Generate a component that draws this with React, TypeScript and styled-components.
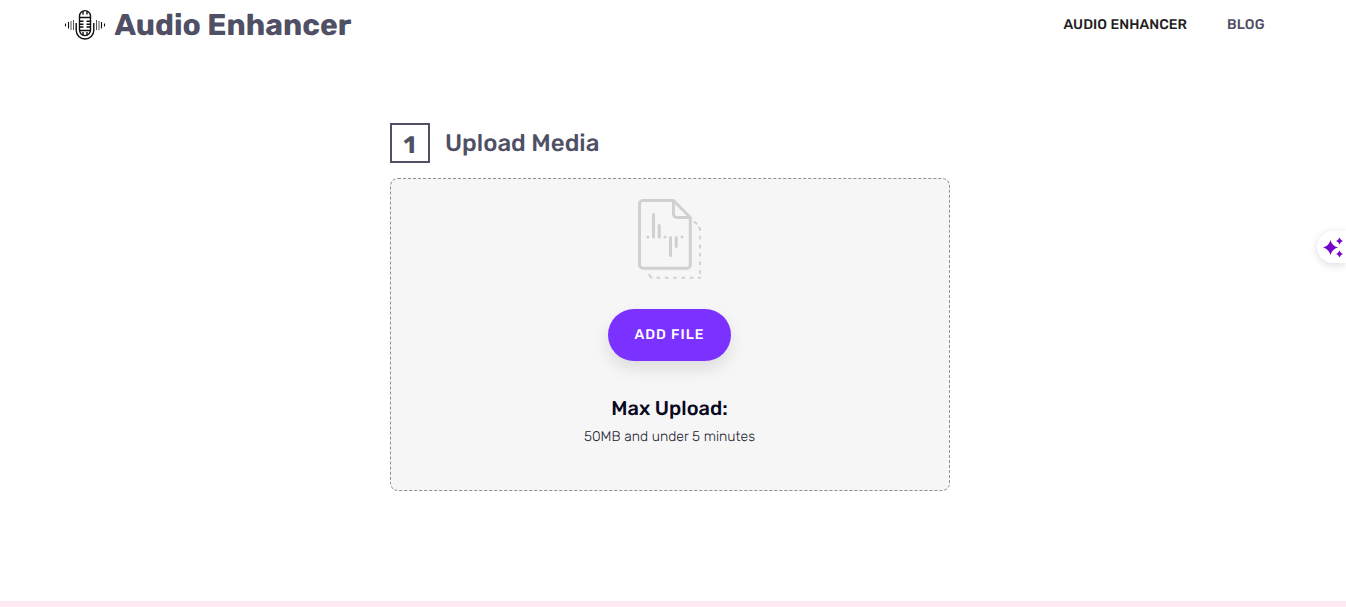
import React from "react";
import styled, { createGlobalStyle } from "styled-components";

const GlobalStyle = createGlobalStyle`
  * { box-sizing: border-box; }
  html, body { margin: 0; padding: 0; }
  body {
    background: #fff;
    color: #4f4f65;
    font-family: Rubik, Roboto, "Liberation Sans", sans-serif;
    text-rendering: geometricPrecision;
    overflow: hidden;
  }
  h1, h2, h3, p { margin: 0; }
`;

const Page = styled.div`
  display: flex;
  flex-direction: column;
  height: 607px;
`;

const Header = styled.header`
  display: flex;
  align-items: center;
  justify-content: space-between;
  height: 50px;
  padding: 0 81.5px 0 64px;
`;

const Brand = styled.div`
  display: flex;
  align-items: center;
  gap: 8.5px;
`;

const BrandName = styled.h1`
  font-size: 30px;
  line-height: 48px;
  font-weight: 700;
  white-space: nowrap;
`;

const Nav = styled.nav`
  display: flex;
  gap: 40px;
  height: 48px;
`;

const NavLink = styled.a<{ $active?: boolean }>`
  font-size: 14px;
  line-height: 48px;
  font-weight: 500;
  letter-spacing: 0.07px;
  white-space: nowrap;
  color: ${(p) => (p.$active ? "#212121" : "#4f4f65")};
`;

const Main = styled.main`
  width: 560px;
  margin: 73px 0 0 390px;
  flex: 1;
`;

const StepHeading = styled.div`
  display: flex;
  align-items: center;
  gap: 15px;
  height: 40px;
  margin-bottom: 15px;
`;

const StepNumber = styled.span`
  width: 40px;
  height: 40px;
  padding-right: 1px;
  border: 2px solid #4f4f65;
  font-size: 24px;
  line-height: 40px;
  font-weight: 700;
  text-align: center;
`;

const StepTitle = styled.h2`
  font-size: 24px;
  line-height: 40px;
  font-weight: 500;
`;

const DropZone = styled.section`
  display: flex;
  flex-direction: column;
  align-items: center;
  height: 313px;
  padding: 19px 1px 0 0;
  border: 1px dashed #8f8f8f;
  border-radius: 8px;
  background: #f6f6f6;
`;

const AddButton = styled.button`
  width: 123px;
  height: 52px;
  margin-top: 30px;
  padding: 0 0 1px;
  border: 0;
  border-radius: 26px;
  background: #7b31ff;
  color: #fff;
  box-shadow: 0 8px 16px rgba(0, 0, 0, 0.1);
  font-family: inherit;
  font-size: 14px;
  font-weight: 500;
  letter-spacing: 1px;
  text-rendering: inherit;
`;

const LimitTitle = styled.h3`
  margin-top: 35px;
  color: #08081f;
  font-size: 20px;
  line-height: 24px;
  font-weight: 500;
`;

const LimitText = styled.p`
  margin-top: 7px;
  color: #202030;
  font-size: 14px;
  line-height: 20px;
  font-weight: 300;
`;

const FooterBand = styled.footer`
  height: 6px;
  background: #ffe9f5;
`;

const AssistTab = styled.div`
  position: absolute;
  top: 231px;
  right: 0;
  width: 29px;
  height: 32px;
  padding: 5px 0 0 6px;
  border-radius: 16px 0 0 16px;
  background: #fff;
  box-shadow: 0 2px 8px rgba(0, 0, 0, 0.14);
`;

const MicLogo = () => (
  <svg width="42" height="34" viewBox="0 0 42 34" fill="none" stroke="#111" strokeWidth="1.4">
    <rect x="15.5" y="2.6" width="11" height="25" rx="5.5" />
    <path d="M12.200 15v7.200a8.800 8.800 0 0 0 17.600 0v-7.200" />
    <path d="M15 9.500h12M15 22.500h12M19 3v3.400M23 3v3.400M19 24v3.400M23 24v3.400" />
    <path d="M15.500 13.300h4M15.500 16.200h4M15.500 19h4M22.500 13.300h4M22.500 16.200h4M22.500 19h4" />
    <path d="M1.500 15.500v3M4.500 14v6.500M37.500 14v6.500M40.500 15.500v3" strokeWidth="1.1" />
    <path d="M7 13v9M9.500 12v10M32.500 12v10M35 13v9" stroke="#555" strokeWidth="1" />
  </svg>
);

const AudioFileIcon = () => (
  <svg width="66" height="81" viewBox="0 0 66 81" fill="none" stroke="#d0d0d0" strokeWidth="3" strokeLinecap="round" strokeLinejoin="round">
    <path d="M36.5 2.5H6A3.500 3.500 0 0 0 2.500 6V66.800a3.500 3.500 0 0 0 3.500 3.500H49.800a3.500 3.500 0 0 0 3.500-3.500V19.500zV16a3.500 3.500 0 0 0 3.500 3.500H53" />
    <path d="M16.500 16.500v22.500M22.200 27.500v11.500M33.500 39.500v18M39.200 39.500v9" />
    <path d="M10.800 39h0M28 39h0M45 39h0" />
    <path d="M57.500 24l2 1.800M62.300 29.500q.8.900.8 2.500M63.100 38.500v2M63.100 47.500v2M63.100 55.800v2M63.100 64.200v2M63.100 73v2" strokeWidth="2" />
    <path d="M63.100 79.700h-1.500M55.700 79.700h-2M47.300 79.700h-2M39 79.700h-2M30.700 79.700h-2M22.300 79.700h-2M12.300 76.700q.5 2 2.200 2.800" strokeWidth="2" />
  </svg>
);

const Sparkles = () => (
  <svg width="22" height="22" viewBox="0 0 22 22" fill="#7400cc">
    <path d="M7.500 4Q9 10 15 11.500Q9 13 7.500 19Q6 13 0 11.500Q6 10 7.500 4z" />
    <path d="M16.500 1.500Q17.400 4.100 20 5Q17.400 5.900 16.500 8.500Q15.600 5.900 13 5Q15.600 4.100 16.500 1.500z" />
    <path d="M16.500 14.500Q17.400 17.100 20 18Q17.400 18.900 16.500 21.500Q15.600 18.900 13 18Q15.600 17.100 16.500 14.500z" />
  </svg>
);

export default function App() {
  return (
    <Page>
      <GlobalStyle />
      <Header>
        <Brand>
          <MicLogo />
          <BrandName>Audio Enhancer</BrandName>
        </Brand>
        <Nav>
          <NavLink $active>AUDIO ENHANCER</NavLink>
          <NavLink>BLOG</NavLink>
        </Nav>
      </Header>
      <Main>
        <StepHeading>
          <StepNumber>1</StepNumber>
          <StepTitle>Upload Media</StepTitle>
        </StepHeading>
        <DropZone>
          <AudioFileIcon />
          <AddButton type="button">ADD FILE</AddButton>
          <LimitTitle>Max Upload:</LimitTitle>
          <LimitText>50MB and under 5 minutes</LimitText>
        </DropZone>
      </Main>
      <FooterBand />
      <AssistTab>
        <Sparkles />
      </AssistTab>
    </Page>
  );
}
